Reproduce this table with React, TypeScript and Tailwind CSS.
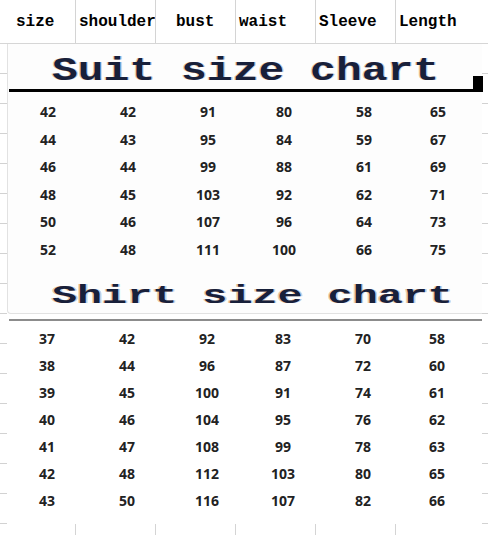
import React from "react";

const headers = [
  { label: "size", cls: "w-[76px] pl-[16px]" },
  { label: "shoulder", cls: "w-[80px] pl-[3px]" },
  { label: "bust", cls: "w-[80px] pl-[20px]" },
  { label: "waist", cls: "w-[80px] pl-[3px]" },
  { label: "Sleeve", cls: "w-[80px] pl-[3px]" },
  { label: "Length", cls: "flex-1 pl-[3px]" },
];

const suitRows = [
  [42, 42, 91, 80, 58, 65],
  [44, 43, 95, 84, 59, 67],
  [46, 44, 99, 88, 61, 69],
  [48, 45, 103, 92, 62, 71],
  [50, 46, 107, 96, 64, 73],
  [52, 48, 111, 100, 66, 75],
];

const shirtRows = [
  [37, 42, 92, 83, 70, 58],
  [38, 44, 96, 87, 72, 60],
  [39, 45, 100, 91, 74, 61],
  [40, 46, 104, 95, 76, 62],
  [41, 47, 108, 99, 78, 63],
  [42, 48, 112, 103, 80, 65],
  [43, 50, 116, 107, 82, 66],
];

const gutter =
  "bg-[repeating-linear-gradient(to_bottom,transparent_0px,transparent_29px,#d2d2d2_29px,#d2d2d2_30px)]";

const titleFont =
  "font-['Liberation_Mono',monospace] font-bold text-[#18203a] [text-shadow:-1px_0_0_rgba(214,140,60,0.45),1px_0_0_rgba(40,90,170,0.3)]";

function NumberRows({ rows, rowCls }: { rows: number[][]; rowCls: string }) {
  return (
    <div className="flex flex-col">
      {rows.map((row, i) => (
        <div
          key={i}
          className={`grid grid-cols-[80px_80px_80px_72px_88px_60px] items-center ${rowCls}`}
        >
          {row.map((v, j) => (
            <span key={j} className="text-center">
              {v}
            </span>
          ))}
        </div>
      ))}
    </div>
  );
}

export default function App() {
  return (
    <div className="w-[488px] h-[535px] overflow-hidden bg-white">
      {/* spreadsheet header */}
      <div className="flex h-[44px] border-b border-[#d6d6d6] font-['Liberation_Mono',monospace] text-[16px] font-bold text-black">
        {headers.map((h, i) => (
          <div
            key={h.label}
            className={`flex items-center overflow-hidden whitespace-nowrap pt-[1px] ${h.cls} ${
              i < headers.length - 1 ? "border-r border-[#d4d4d4]" : ""
            }`}
          >
            {h.label}
          </div>
        ))}
      </div>

      {/* pasted chart */}
      <div className="flex h-[480px]">
        <div className={`w-[7px] shrink-0 ${gutter}`} />

        <div className="flex w-[475px] flex-col bg-white font-['Open_Sans',sans-serif] text-[14px] font-bold text-[#222222]">
          <div className="flex flex-col rounded-bl-[4px] border-b border-l border-[#e2e2e2] bg-[#fdfdfd]">
            <div className="ml-[1px] flex items-end">
              <div className="flex-1 border-b-[3px] border-black pl-[43px] pt-[10px] pb-[1px]">
                <span className={`inline-block origin-left scale-x-[1.265] text-[34px] leading-[34px] ${titleFont}`}>
                  Suit size chart
                </span>
              </div>
              <div className="-mr-[1px] h-[16px] w-[10px] bg-black" />
            </div>

            <div className="pt-[6px]">
              <NumberRows rows={suitRows} rowCls="h-[27.5px]" />
            </div>

            <div className="pl-[44px] pt-[21px] pb-[4px]">
              <span className={`inline-block origin-left scale-x-[1.67] text-[25px] leading-[25px] ${titleFont}`}>
                Shirt size chart
              </span>
            </div>
          </div>

          <div className="ml-[2px] mt-[5px] h-[2px] bg-[#8c8c8c]" />

          <div className="flex-1 pt-[4px]">
            <NumberRows rows={shirtRows} rowCls="h-[27px]" />
          </div>
        </div>

        <div className={`w-[6px] shrink-0 ${gutter}`} />
      </div>

      {/* spreadsheet bottom cells */}
      <div className="flex h-[11px]">
        {headers.map((h, i) => (
          <div
            key={h.label}
            className={`${h.cls.split(" ")[0]} ${i < headers.length - 1 ? "border-r border-[#d4d4d4]" : ""}`}
          />
        ))}
      </div>
    </div>
  );
}
